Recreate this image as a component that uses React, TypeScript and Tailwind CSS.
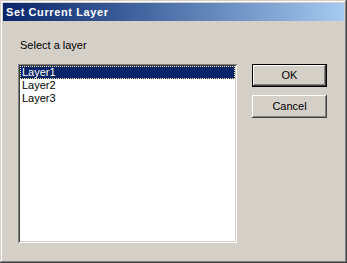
import { useState } from 'react';

const layers = ['Layer1', 'Layer2', 'Layer3'];

const raised =
  'shadow-[inset_-1px_-1px_#404040,inset_1px_1px_#ffffff,inset_-2px_-2px_#808080,inset_2px_2px_#d4d0c8]';

export default function App() {
  const [selected, setSelected] = useState(0);

  return (
    <div
      className="flex h-[263px] w-[347px] flex-col bg-[#d4d0c8] p-[3px] text-[11px] text-black shadow-[inset_-1px_-1px_#404040,inset_1px_1px_#d4d0c8,inset_-2px_-2px_#808080,inset_2px_2px_#ffffff]"
      style={{ fontFamily: '"Liberation Sans", Arial, sans-serif' }}
    >
      <div className="flex h-[18px] items-center bg-gradient-to-r from-[#0a246a] to-[#a6caf0] pl-[3px]">
        <span className="text-[11px] font-bold tracking-[0.6px] text-white">Set Current Layer</span>
      </div>

      <div className="flex pl-[15px] pt-[18px]">
        <div className="flex flex-col">
          <span className="h-[13px] pl-[2px] leading-[13px]">Select a layer</span>
          <div className="mt-[12px] h-[179px] w-[219px] bg-white p-[2px] shadow-[inset_1px_1px_#808080,inset_-1px_-1px_#ffffff,inset_2px_2px_#404040,inset_-2px_-2px_#d4d0c8]">
            {layers.map((layer, i) => (
              <div
                className={
                  i === selected
                    ? 'h-[13px] border border-dotted border-[#f0e8a0] bg-[#0a246a] pl-[1px] leading-[11px] text-white'
                    : 'h-[13px] pl-[2px] leading-[13px]'
                }
                key={layer}
                onClick={() => setSelected(i)}
              >
                {layer}
              </div>
            ))}
          </div>
        </div>

        <div className="ml-[15px] mt-[25px] flex flex-col gap-[8px]">
          <button className="h-[23px] w-[75px] border border-black bg-[#d4d0c8] p-0">
            <div className={`flex h-full w-full items-center justify-center ${raised}`}>OK</div>
          </button>
          <button className={`flex h-[23px] w-[75px] items-center justify-center bg-[#d4d0c8] ${raised}`}>
            Cancel
          </button>
        </div>
      </div>
    </div>
  );
}
